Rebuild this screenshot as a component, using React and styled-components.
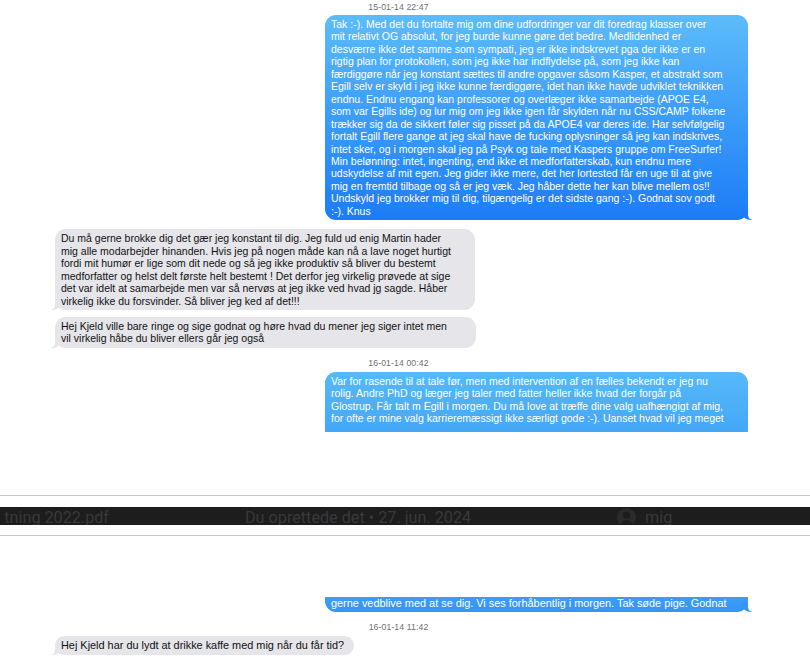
import React from 'react';
import styled, { createGlobalStyle } from 'styled-components';

const GlobalStyle = createGlobalStyle`
  html, body {
    margin: 0;
    padding: 0;
    background: #fff;
  }
  body {
    font-family: 'Liberation Sans', Arial, sans-serif;
  }
`;

const Page = styled.div`
  width: 810px;
  height: 663px;
  overflow: hidden;
  background: #fff;
  display: flex;
  flex-direction: column;
`;

const Thread = styled.div`
  display: flex;
  flex-direction: column;
  flex-shrink: 0;
  padding: 0 62px 0 55px;
  height: ${(p) => p.$height}px;
  margin-top: ${(p) => p.$top || 0}px;
  overflow: hidden;
`;

const Stamp = styled.div`
  align-self: center;
  margin: ${(p) => p.$gap || '2px 0 3px'};
  padding-right: 6px;
  font-size: 8.7px;
  line-height: 10px;
  color: #6f6f74;
  letter-spacing: 0.1px;
`;

const Bubble = styled.div`
  position: relative;
  align-self: ${(p) => (p.$me ? 'flex-end' : 'flex-start')};
  width: ${(p) => p.$w}px;
  margin-top: ${(p) => p.$mt || 0}px;
  padding: ${(p) => (p.$cut === 'top' ? '0' : '3px')} 6px ${(p) => (p.$cut === 'bottom' ? '8px' : '3px')};
  border-radius: ${(p) =>
    p.$cut === 'top' ? '0 0 11px 11px' : p.$cut === 'bottom' ? '11px 11px 0 0' : '11px'};
  background: ${(p) => (p.$me ? `linear-gradient(${p.$from}, ${p.$to})` : '#e5e5ea')};
  color: ${(p) => (p.$me ? '#fff' : '#111')};
  font-size: ${(p) => p.$fs || 10.5}px;
  line-height: 12.45px;
  white-space: pre;
  box-sizing: border-box;

  ${(p) =>
    p.$cut === 'bottom'
      ? ''
      : `
  &::before {
    content: '';
    position: absolute;
    bottom: 0;
    ${p.$me ? 'right: -4px;' : 'left: -4px;'}
    width: 10px;
    height: 10px;
    background: ${p.$me ? p.$to : '#e5e5ea'};
    ${p.$me ? 'border-bottom-left-radius: 9px 7px;' : 'border-bottom-right-radius: 9px 7px;'}
  }
  &::after {
    content: '';
    position: absolute;
    bottom: 0;
    ${p.$me ? 'right: -7px;' : 'left: -7px;'}
    width: 7px;
    height: 10px;
    background: #fff;
    ${p.$me ? 'border-bottom-left-radius: 5px;' : 'border-bottom-right-radius: 5px;'}
  }`}
`;

const Rule = styled.div`
  flex-shrink: 0;
  height: 1px;
  margin-top: ${(p) => p.$top}px;
  background: #c4c4c4;
`;

const DriveBar = styled.div`
  flex-shrink: 0;
  display: flex;
  align-items: center;
  height: 18px;
  margin-top: 11px;
  background: #1d1d1e;
  overflow: hidden;
  font-family: Roboto, 'Liberation Sans', sans-serif;
  font-size: 16.2px;
  line-height: 18px;
  color: #39393a;
  white-space: nowrap;
`;

const FileName = styled.div`
  width: 109px;
  display: flex;
  justify-content: flex-end;
  overflow: hidden;
  padding-top: 3px;
`;

const Created = styled.div`
  width: 372px;
  margin-left: 136px;
  padding-top: 3px;
`;

const Owner = styled.div`
  display: flex;
  align-items: center;
  gap: 9px;
  padding-top: 3px;
`;

const Avatar = () => (
  <svg width="19" height="19" viewBox="0 0 19 19">
    <circle cx="9.5" cy="9.5" r="9.5" fill="#2b2b2c" />
    <circle cx="9.5" cy="7.2" r="3.6" fill="#1d1d1e" />
    <path d="M3.2 16.2c1.2-2.9 3.6-4.3 6.3-4.3s5.1 1.4 6.3 4.3A9.4 9.4 0 0 1 3.2 16.2z" fill="#1d1d1e" />
  </svg>
);

const first = [
  'Tak :-). Med det du fortalte mig om dine udfordringer var dit foredrag klasser over',
  'mit relativt OG absolut, for jeg burde kunne gøre det bedre. Medlidenhed er',
  'desværre ikke det samme som sympati, jeg er ikke indskrevet pga der ikke er en',
  'rigtig plan for protokollen, som jeg ikke har indflydelse på, som jeg ikke kan',
  'færdiggøre når jeg konstant sættes til andre opgaver såsom Kasper, et abstrakt som',
  'Egill selv er skyld i jeg ikke kunne færdiggøre, idet han ikke havde udviklet teknikken',
  'endnu. Endnu engang kan professorer og overlæger ikke samarbejde (APOE E4,',
  'som var Egills ide) og lur mig om jeg ikke igen får skylden når nu CSS/CAMP folkene',
  'trækker sig da de sikkert føler sig pisset på da APOE4 var deres ide. Har selvfølgelig',
  'fortalt Egill flere gange at jeg skal have de fucking oplysninger så jeg kan indskrives,',
  'intet sker, og i morgen skal jeg på Psyk og tale med Kaspers gruppe om FreeSurfer!',
  'Min belønning: intet, ingenting, end ikke et medforfatterskab, kun endnu mere',
  'udskydelse af mit egen. Jeg gider ikke mere, det her lortested får en uge til at give',
  'mig en fremtid tilbage og så er jeg væk. Jeg håber dette her kan blive mellem os!!',
  'Undskyld jeg brokker mig til dig, tilgængelig er det sidste gang :-). Godnat sov godt',
  ':-). Knus',
].join('\n');

const reply = [
  'Du må gerne brokke dig det gær jeg konstant til dig. Jeg fuld ud enig Martin hader',
  'mig alle modarbejder hinanden. Hvis jeg på nogen måde kan nå a lave noget hurtigt',
  'fordi mit humør er lige som dit nede og så jeg ikke produktiv så bliver du bestemt',
  'medforfatter og helst delt første helt bestemt ! Det derfor jeg virkelig prøvede at sige',
  'det var idelt at samarbejde men var så nervøs at jeg ikke ved hvad jg sagde. Håber',
  'virkelig ikke du forsvinder. Så bliver jeg ked af det!!!',
].join('\n');

const call = [
  'Hej Kjeld ville bare ringe og sige godnat og høre hvad du mener jeg siger intet men',
  'vil virkelig håbe du bliver ellers går jeg også',
].join('\n');

const later = [
  'Var for rasende til at tale før, men med intervention af en fælles bekendt er jeg nu',
  'rolig. Andre PhD og læger jeg taler med fatter heller ikke hvad der forgår på',
  'Glostrup. Får talt m Egill i morgen. Du må love at træffe dine valg uafhængigt af mig,',
  'for ofte er mine valg karrieremæssigt ikke særligt gode :-). Uanset hvad vil jeg meget',
].join('\n');

export default function App() {
  return (
    <>
      <GlobalStyle />
      <Page>
        <Thread $height={432}>
          <Stamp>15-01-14 22:47</Stamp>
          <Bubble $me $w={423} $from="#5cbcfa" $to="#1c7cf6">
            {first}
          </Bubble>
          <Bubble $w={420} $mt={9}>
            {reply}
          </Bubble>
          <Bubble $w={421} $mt={7}>
            {call}
          </Bubble>
          <Stamp $gap="10px 0 4px">16-01-14 00:42</Stamp>
          <Bubble $me $w={423} $from="#56b9f9" $to="#44a7f7" $cut="bottom">
            {later}
          </Bubble>
        </Thread>

        <Rule $top={63} />
        <DriveBar>
          <FileName>tning 2022.pdf</FileName>
          <Created>Du oprettede det • 27. jun. 2024</Created>
          <Owner>
            <Avatar />
            mig
          </Owner>
        </DriveBar>
        <Rule $top={10} />

        <Thread $height={66} $top={61}>
          <Bubble $me $w={423} $fs={10.9} $from="#3d9cf7" $to="#3595f6" $cut="top">
            {'gerne vedblive med at se dig. Vi ses forhåbentlig i morgen. Tak søde pige. Godnat'}
          </Bubble>
          <Stamp $gap="10px 0 4px">16-01-14 11:42</Stamp>
          <Bubble $w={299} $fs={10.9}>
            {'Hej Kjeld har du lydt at drikke kaffe med mig når du får tid?'}
          </Bubble>
        </Thread>
      </Page>
    </>
  );
}
